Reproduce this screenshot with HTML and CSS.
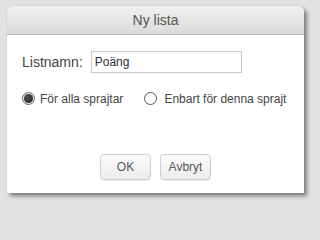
FILE: index.html
```html
<!DOCTYPE html>
<html lang="sv">
<head>
<meta charset="utf-8">
<title>Ny lista</title>
<link rel="stylesheet" href="styles.css">
</head>
<body>
<div class="dialog">
  <div class="header">Ny lista</div>
  <div class="content">
    <div class="name-row">
      <label class="name-label" for="listname">Listnamn:</label>
      <input id="listname" class="name-input" type="text" value="Poäng">
    </div>
    <div class="radio-row">
      <label class="radio-item">
        <span class="radio checked"><span class="dot"></span></span>
        <span class="radio-text">För alla sprajtar</span>
      </label>
      <label class="radio-item second">
        <span class="radio"></span>
        <span class="radio-text">Enbart för denna sprajt</span>
      </label>
    </div>
    <div class="button-row">
      <button class="btn">OK</button>
      <button class="btn">Avbryt</button>
    </div>
  </div>
</div>
</body>
</html>
```

FILE: styles.css
```css
html, body {
  margin: 0;
  padding: 0;
}
body {
  background: #e2e2e2;
  font-family: "Liberation Sans", Arial, sans-serif;
  padding: 6px 0 0 7px;
  height: 204px;
  box-sizing: border-box;
  overflow: hidden;
}
.dialog {
  width: 297px;
  height: 187px;
  background: #ffffff;
  border-radius: 6px 6px 0 0;
  box-shadow: 3px 3px 4px rgba(0, 0, 0, 0.45), 0 0 1px rgba(0, 0, 0, 0.25);
  display: flex;
  flex-direction: column;
}
.header {
  height: 28px;
  border-radius: 6px 6px 0 0;
  background: linear-gradient(#f1f1f1, #dadada);
  border-bottom: 1px solid #b5b5b5;
  color: #555555;
  font-size: 14px;
  line-height: 28px;
  text-align: center;
}
.content {
  padding: 16px 0 0 15px;
  display: flex;
  flex-direction: column;
}
.name-row {
  display: flex;
  align-items: center;
  height: 22px;
}
.name-label {
  font-size: 14px;
  color: #444444;
  margin-right: 8px;
}
.name-input {
  width: 151px;
  height: 22px;
  box-sizing: border-box;
  border: 1px solid #c9c9c9;
  padding: 0 0 0 3px;
  margin: 0;
  font-family: "Liberation Sans", Arial, sans-serif;
  font-size: 12px;
  color: #333333;
  outline: none;
}
.radio-row {
  display: flex;
  align-items: center;
  margin-top: 19px;
  height: 13px;
}
.radio-item {
  display: flex;
  align-items: center;
  gap: 5px;
  font-size: 12px;
  color: #444444;
}
.radio-item.second {
  margin-left: 21px;
  gap: 7px;
}
.radio {
  width: 13px;
  height: 13px;
  box-sizing: border-box;
  border-radius: 50%;
  border: 1px solid #555555;
  background: #ffffff;
  display: flex;
  align-items: center;
  justify-content: center;
}
.radio.checked {
  border-color: #6a6a6a;
  background: #e8e8e8;
}
.dot {
  width: 9px;
  height: 9px;
  border-radius: 50%;
  background: radial-gradient(circle at 40% 35%, #555555, #1a1a1a);
}
.button-row {
  display: flex;
  justify-content: center;
  gap: 9px;
  margin-top: 49px;
  padding-right: 15px;
}
.btn {
  width: 51px;
  height: 26px;
  border: 1px solid #cfcfcf;
  border-radius: 4px;
  background: linear-gradient(#fbfbfb, #ececec);
  box-shadow: 0 1px 1px rgba(0, 0, 0, 0.08);
  font-family: "Liberation Sans", Arial, sans-serif;
  font-size: 12px;
  color: #555555;
  padding: 0;
}
```
